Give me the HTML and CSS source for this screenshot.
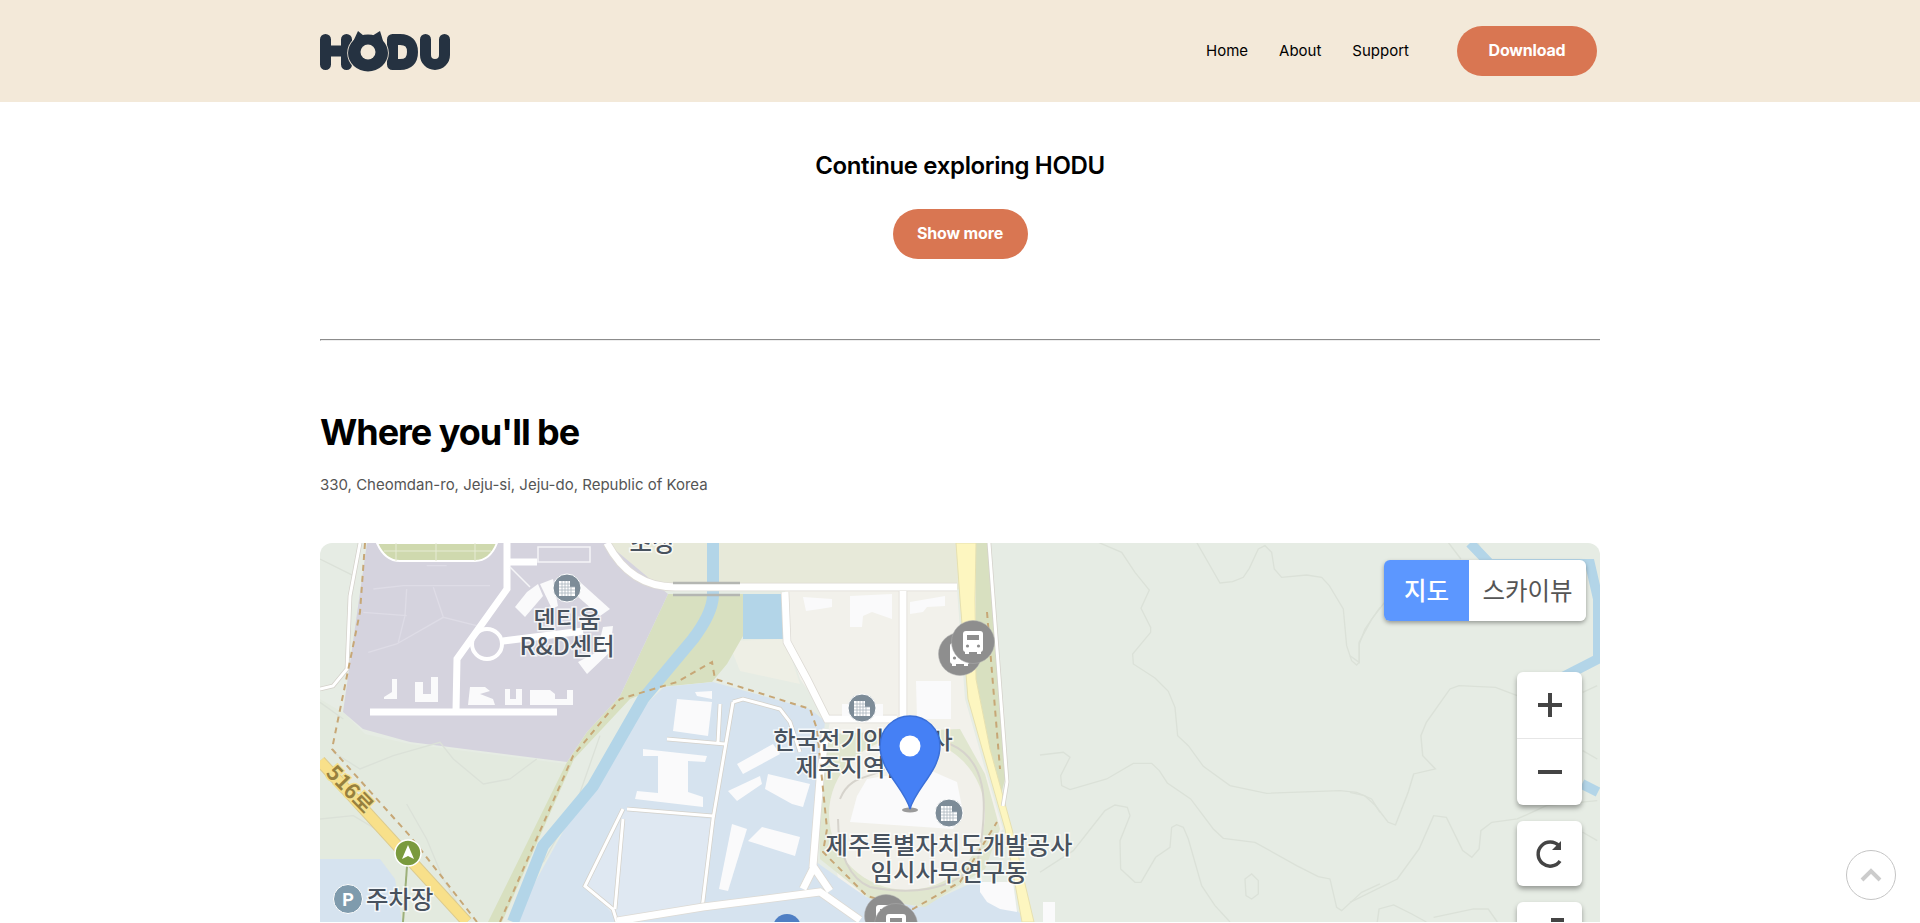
FILE: index.html
```html
<!DOCTYPE html>
<html lang="en">
<head>
<meta charset="utf-8">
<title>HODU</title>
<link rel="stylesheet" href="styles.css">
</head>
<body>
<header class="site-header">
  <div class="container header-inner">
    <a class="logo" href="#" aria-label="HODU">
      <svg width="131" height="42" viewBox="320 30 131 42" class="logo-svg">
        <g class="logo-stroke">
          <path d="M325.5 39.5V64.5M346.5 39.5V64.5M325.5 51H346.5"/>
          <path d="M392.5 39.5V64.5H400Q412.5 64.5 412.5 52T400 39.5Z"/>
          <path d="M425.5 39.5V55A9.5 9.5 0 0 0 444.5 55V39.5"/>
        </g>
        <ellipse class="logo-gap" cx="368" cy="53" rx="20.800" ry="19.300"/>
        <ellipse class="logo-fill" cx="368" cy="53" rx="20" ry="18.500"/>
        <path class="logo-fill" d="M358 31L364 36L352 44Z"/>
        <path class="logo-fill" d="M380 31L372 36L384 44Z"/>
        <circle class="logo-gap" cx="368" cy="52" r="7.500"/>
      </svg>
    </a>
    <nav class="nav">
      <a href="#">Home</a>
      <a href="#">About</a>
      <a href="#">Support</a>
      <a href="#" class="btn btn-download">Download</a>
    </nav>
  </div>
</header>

<main class="container">
  <section class="explore">
    <h3 class="explore-title">Continue exploring HODU</h3>
    <a href="#" class="btn btn-more">Show more</a>
  </section>
  <hr class="divider">
  <section class="where">
    <h2 class="where-title">Where you'll be</h2>
    <p class="where-address">330, Cheomdan-ro, Jeju-si, Jeju-do, Republic of Korea</p>
    <div class="map">
      <svg class="map-svg" width="1280" height="379" viewBox="320 544 1280 379">
        <defs>
          <g id="bld">
            <circle r="14" class="ic-bld"/>
            <path class="ic-glyph" d="M-8 -7H3V-1H8V8H-8Z"/>
            <path class="ic-grid" d="M-5 -7V8M-2 -7V8M1 -7V8M4 -1V8M-8 -4H3M-8 -1H8M-8 2H8M-8 5H8"/>
          </g>
          <g id="bus">
            <circle r="21.5" class="ic-bus"/>
            <rect x="-10" y="-11" width="20" height="21" rx="3" class="ic-glyph"/>
            <rect x="-6" y="-7" width="12" height="5" class="ic-bus-win"/>
            <rect x="-8" y="9" width="4" height="3" class="ic-glyph"/>
            <rect x="4" y="9" width="4" height="3" class="ic-glyph"/>
            <circle cx="-5.5" cy="4" r="1.6" class="ic-bus-win"/>
            <circle cx="5.5" cy="4" r="1.6" class="ic-bus-win"/>
          </g>
        </defs>

        <rect x="320" y="544" width="1280" height="379" class="m-base"/>
        <path class="m-low" d="M320 700L345 715L365 735L410 745L567 765L500 923H320Z"/>
        <path class="m-top" d="M610 544H960V590H675Q630 590 610 544Z"/>
        <path class="m-beige" d="M785 590H957L965 700L985 770L1003 830L960 880L900 900L840 890L820 780L830 722L800 680L787 640Z"/>
        <path class="m-beige2" d="M728 642L785 640L800 685L740 672Z"/>
        <path class="m-green" d="M668 595H747V630L727 665L712 683L660 688L630 700L574 760L502 923H488L567 763L587 733L620 697Z"/>
        <path class="m-campus" d="M664 688L713 683L810 710L825 722L812 860L866 898L920 908L980 880L1030 923H513L620 730Z"/>
        <path class="m-campus-in" d="M625 812L712 820L702 908L618 921L587 887Z"/>
        <path class="m-green2" d="M826 735L818 800L820 860L870 900L925 908L985 870L1000 830L985 775L960 730Z"/>
        <ellipse class="m-site" cx="907" cy="815" rx="78" ry="76"/>
        <path class="m-campus" d="M320 860H380L395 880L402 923H320Z"/>
        <path class="m-purple" d="M367 544L343 713L363 730L410 743L567 763L587 733L620 697L668 595L607 544Z"/>
        <path class="m-field" d="M377 544Q385 562 400 562H475Q490 562 497 544Z"/>
        <path class="m-field-line" d="M396 544V562M436 544V562M475 544V562M384 552H491"/>
        <path class="m-stripgreen" d="M976 544L988 544L1005 780L1000 800L990 750L976 680Z"/>

        <g transform="translate(310 530) scale(.3333)" class="m-inner">
          <path d="M190 180L280 170L370 170L540 170M290 180L285 260L265 340M175 370L260 345L400 265L500 290M370 175L400 265M160 250L290 260M350 110H410"/>
        </g>
        <g transform="translate(1040 530) scale(.3333)" class="m-contour">
          <path d="M175 40L245 70L285 130L328 183L303 238L332 295V310L278 375L280 405L345 447L385 487L405 535L413 620L445 650L490 712L570 770L680 793L900 785L950 790L995 810L1020 850"/>
          <path d="M470 40L540 162L578 158L610 145L628 118L655 60L675 50L695 70L703 120L725 145L800 138L845 145L868 170L910 240L920 350L935 395L950 408L958 400V345L975 300L1020 235"/>
          <path d="M0 678L70 670L90 685L62 740L65 770L90 782L200 750L280 703L335 703L358 725L382 762L452 810L520 900L550 928L645 940L770 1010L835 1043L870 1050L890 1135L905 1145L965 1090L1020 1065"/>
          <path d="M0 1030L100 965L195 845L225 828L262 835L270 860L240 935L242 1020L285 1060H303L347 985L390 955L395 895L410 887L430 895L445 930L485 1070L525 1130L570 1179"/>
          <path d="M615 1050L635 1035L655 1055V1095L635 1110L618 1100Z"/>
        </g>
        <g transform="translate(1350 530) scale(.3636 .3333)" class="m-contour">
          <path d="M0 790L40 800L70 830L105 880L125 888L160 790L175 735L235 720L200 680L195 620L210 580L275 480L300 470L400 475L460 500"/>
          <path d="M0 1120L130 1050L190 960L230 860L265 865L310 965L335 985L355 960L360 905L390 880L460 870L540 830L680 815"/>
          <path d="M640 490L680 470M640 665L680 690M640 910L680 935M0 380L25 400V340L60 270L95 220M270 40L305 90M350 40L375 90"/>
          <path d="M75 1179L80 1140L120 1128L170 1155L210 1179M230 1165L340 1140L380 1140L405 1179"/>
        </g>
        <g transform="translate(310 530) scale(.3333)" class="m-contour">
          <path d="M30 90L130 140M30 520L100 570M70 670L150 720L250 680L390 640L430 690L520 765L600 750L680 690M290 825L350 930L400 1050L440 1120M30 870L130 860L230 920M700 1000L800 820L870 620"/>
        </g>

        <path class="m-water" d="M713 544V597Q712 615 693 640L643 700L593 787L543 847L513 923"/>
        <path class="m-water-thin" d="M1470 544L1490 565H1590L1598 600L1598 660L1555 682"/>
        <path class="m-water-thin" d="M1582 785L1598 793"/>
        <rect class="m-pond" x="743" y="595" width="40" height="45"/>

        <path class="m-road-y-edge" d="M320 762L467 923"/>
        <path class="m-road-y" d="M320 762L467 923"/>
        <path class="m-pale" d="M956 544L960 600L968 700L985 760L1005 830L1022 923H1034L1012 830L990 750L976 680L975 600L976 544Z"/>

        <g class="r-edge">
          <path d="M733 703L713 820L702 910M667 740L725 745M720 705L718 743M733 703L743 700L780 710L790 723L800 753M627 810L713 817M623 810L585 887L613 910L617 923M623 820L615 910"/>
          <path d="M989 544L1007 783L1003 807"/>
          <path d="M360 544L350 597L347 670L333 687L320 690"/>
        </g>
        <g class="r-white">
          <path d="M733 703L713 820L702 910M667 740L725 745M720 705L718 743M733 703L743 700L780 710L790 723L800 753M627 810L713 817M623 810L585 887L613 910L617 923M623 820L615 910"/>
          <path d="M989 544L1007 783L1003 807"/>
          <path d="M360 544L350 597L347 670L333 687L320 690"/>
        </g>
        <g class="r-wide-edge">
          <path d="M617 922L703 908L820 893L860 921"/>
          <path d="M785 593L787 643L807 680L827 720H897"/>
          <path d="M903 592V717"/>
          <path d="M607 544Q630 588 675 588H957"/>
          <path d="M826 730L820 780L813 867L830 892M813 870L803 890"/>
        </g>
        <g class="r-wide">
          <path d="M617 922L703 908L820 893L860 921"/>
          <path d="M785 593L787 643L807 680L827 720H897"/>
          <path d="M903 592V717"/>
          <path d="M607 544Q630 588 675 588H957"/>
          <path d="M826 730L820 780L813 867L830 892M813 870L803 890"/>
          <path d="M507 544V590L457 660L456 712"/>
          <path d="M370 713H557"/>
          <path d="M510 563H537"/>
          <path d="M503 642L583 632"/>
        </g>
        <path class="r-bridge" d="M673 584H740M673 596H740"/>
        <circle class="r-round" cx="487" cy="645" r="15"/>
        <path class="r-thin" d="M510 568L530 588M538 548H590V563H538Z"/>
        <path class="r-site" d="M840 800C850 775 870 780 885 770M950 745C985 760 990 800 978 860C955 895 905 895 870 888C850 880 838 855 838 820"/>

        <g class="m-bld">
          <path d="M515 608L525 618L543 597L538 585L527 593Z"/>
          <path d="M540 585L553 580L558 607L552 610Z"/>
          <path d="M580 583L610 610L600 617L577 597Z"/>
          <path d="M603 628L613 627L610 653L587 675L578 663L597 653Z"/>
          <path d="M384 698L392 693V680H397V700H384Z"/>
          <path d="M415 703H438V678H431V695H423V683H415Z"/>
          <path d="M468 706H495L493 700L480 695L490 692L485 688H470Z"/>
          <path d="M505 706H522V690H516V700H510V690H505Z"/>
          <path d="M530 706H573V691H567V700H555V695L550 691H530Z"/>
          <path d="M677 700L712 703L708 737L673 732Z"/>
          <path d="M695 693L712 692V700L697 697Z"/>
          <path d="M643 750L707 757L705 763L688 762V793L703 798V808L635 800L637 792L658 794V757L643 757Z"/>
          <path d="M737 765L773 745L780 755L743 775Z"/>
          <path d="M728 792L760 777L762 785L737 802Z"/>
          <path d="M768 775L810 785L803 808L792 805L765 790Z"/>
          <path d="M732 825L747 830L728 892L719 890Z"/>
          <path d="M762 828L800 838L795 857L748 842Z"/>
          <path d="M803 598L832 600V608L820 610L806 612Z"/>
          <path d="M850 597L892 595V620L872 613L863 617L862 628H850Z"/>
          <path d="M910 603L945 597V607L927 608L923 613L910 615Z"/>
          <path d="M916 682H951V720H917Z"/>
          <path d="M842 705H883V717H842Z"/>
          <path d="M867 780L927 770L957 783L963 813L953 830L850 823L857 797Z"/>
          <path d="M980 883H1013L1017 913L1000 910L987 903L980 893Z"/>
          <path d="M1043 903H1055V923H1043Z"/>
        </g>

        <path class="m-dash" d="M365 544L360 613L332 750L410 837L477 923"/>
        <path class="m-dash" d="M500 923L573 757L620 700L677 683L712 663L715 680L810 710L817 730L827 830L823 853L867 897L913 910L960 883L997 823"/>
        <path class="m-dash" d="M987 613L1000 770"/>

        <g class="m-road-label" transform="translate(351 789) rotate(46)">
          <text text-anchor="middle">516로</text>
        </g>
        <use href="#bld" x="567" y="589"/>
        <use href="#bld" x="862" y="709"/>
        <use href="#bld" x="949" y="814"/>
        <use href="#bus" x="960" y="655"/>
        <use href="#bus" x="973" y="643"/>
        <use href="#bus" x="886" y="917"/>
        <use href="#bus" x="896" y="926"/>
        <circle cx="787" cy="929" r="14" class="ic-blue"/>

        <path class="r-thin-g" d="M407 867L403 923"/>
        <circle cx="408" cy="854" r="13" class="ic-nav"/>
        <path class="ic-glyph" d="M408 846L414 860L408 857L402 860Z"/>
        <circle cx="348" cy="900" r="14.5" class="ic-p"/>
        <text x="348" y="906.500" text-anchor="middle" class="ic-p-text">P</text>

        <text x="652" y="552" text-anchor="middle" class="m-label">초정</text>
        <text x="567" y="629" text-anchor="middle" class="m-label">덴티움</text>
        <text x="567" y="656" text-anchor="middle" class="m-label">R&amp;D센터</text>
        <text x="863" y="750" text-anchor="middle" class="m-label">한국전기안전공사</text>
        <text x="863" y="777" text-anchor="middle" class="m-label">제주지역본부</text>
        <text x="949" y="855" text-anchor="middle" class="m-label">제주특별자치도개발공사</text>
        <text x="949" y="882" text-anchor="middle" class="m-label">임시사무연구동</text>
        <text x="366" y="909" class="m-label">주차장</text>

        <ellipse cx="910" cy="811" rx="8" ry="2.500" class="pin-shadow"/>
        <path class="pin" d="M910 810C905 790 880 772 880 747A30 30 0 1 1 940 747C940 772 915 790 910 810Z"/>
        <circle cx="910" cy="747" r="10.500" class="ic-glyph"/>
      </svg>

      <div class="map-tabs">
        <span class="tab tab-on">지도</span>
        <span class="tab tab-off">스카이뷰</span>
      </div>
      <div class="map-controls">
        <div class="ctrl-card">
          <button class="ctrl ctrl-half" aria-label="zoom in">
            <svg width="26" height="26" viewBox="0 0 26 26"><path class="ctrl-line" d="M1 13H25M13 1V25"/></svg>
          </button>
          <button class="ctrl ctrl-half ctrl-sep" aria-label="zoom out">
            <svg width="26" height="26" viewBox="0 0 26 26"><path class="ctrl-line" d="M1 13H25"/></svg>
          </button>
        </div>
        <div class="ctrl-card">
          <button class="ctrl ctrl-single" aria-label="reset">
            <svg width="32" height="32" viewBox="0 0 32 32">
              <path class="ctrl-arc" d="M25 8A12 12 0 1 0 26 23"/>
              <path class="ctrl-arrow" d="M27 3V12H18Z"/>
            </svg>
          </button>
        </div>
        <div class="ctrl-card">
          <button class="ctrl ctrl-single ctrl-cut" aria-label="full screen">
            <svg width="14" height="12" viewBox="0 0 14 12"><path class="ctrl-arrow" d="M1 0H14V12H10V4H1Z"/></svg>
          </button>
        </div>
      </div>
    </div>
  </section>
</main>

<a href="#" class="to-top" aria-label="top">
  <svg width="22" height="14" viewBox="0 0 22 14"><path class="to-top-line" d="M2 12L11 3L20 12"/></svg>
</a>
</body>
</html>
```
FILE: styles.css
```css
* { box-sizing: border-box; }
html, body { margin: 0; padding: 0; background: #fff; }
body { font-family: Inter, "Liberation Sans", sans-serif; color: #000; }
a { color: inherit; text-decoration: none; }

.container { width: 1280px; margin: 0 auto; }

.site-header { height: 102px; background: #f3e9d9; }
.header-inner { height: 100%; display: flex; align-items: center; justify-content: space-between; padding-right: 3px; }
.logo { display: block; height: 42px; }
.logo-svg { display: block; }
.logo-stroke { fill: none; stroke: #253241; stroke-width: 11; stroke-linecap: round; stroke-linejoin: round; }
.logo-gap { fill: #f3e9d9; }
.logo-fill { fill: #253241; }

.nav { display: flex; align-items: center; gap: 31px; font-size: 15px; line-height: 16px; }
.btn { display: flex; align-items: center; justify-content: center; height: 50px; border-radius: 25px; background: #d97652; color: #fff; font-weight: 700; font-size: 16px; letter-spacing: -.2px; padding-bottom: 2px; }
.nav .btn-download { width: 140px; margin-left: 17px; }
.btn-more { width: 135px; margin: 0 auto; letter-spacing: -.15px; }

.explore { padding-top: 49px; padding-bottom: 80px; text-align: center; }
.explore-title { margin: 0 0 29px; font-size: 24px; line-height: 29px; font-weight: 600; letter-spacing: -.35px; }

.divider { margin: 0; height: 2px; border: 0; border-top: 1px solid #8c8c8c; border-left: 1px solid #8c8c8c; border-bottom: 1px solid #eee; }

.where-title { margin: 69px 0 21px; font-size: 36px; line-height: 44px; font-weight: 700; letter-spacing: -1.05px; }
.where-address { margin: 0 0 49px; font-size: 15px; line-height: 19px; color: #555; }

.map { position: relative; height: 379px; overflow: hidden; border-radius: 12px 12px 0 0; }
.map-svg { display: block; }

.m-base { fill: #e6ece4; }
.m-low { fill: #e3eadf; }
.m-top { fill: #e7e9d9; }
.m-beige { fill: #f2f1eb; }
.m-beige2 { fill: #eeefe5; }
.m-green { fill: #d8e0c0; }
.m-green2 { fill: #e0e6cf; }
.m-campus { fill: #d6e3ef; }
.m-campus-in { fill: #dfe8f2; }
.m-site { fill: #f1f0ea; }
.m-purple { fill: #d5d3de; }
.m-field { fill: #cfd9ae; stroke: #fff; stroke-width: 2; }
.m-field-line { fill: none; stroke: #e6ebd4; stroke-width: 1; }
.m-stripgreen { fill: #d8e0c0; }
.m-inner { fill: none; stroke: #dedce6; stroke-width: 4; }
.m-contour { fill: none; stroke: #dbe1d8; stroke-width: 4; }
.m-water { fill: none; stroke: #b3d5e8; stroke-width: 12; }
.m-water-thin { fill: none; stroke: #b3d5e8; stroke-width: 10; }
.m-pond { fill: #b3d5e8; }
.m-road-y { fill: none; stroke: #f8e08a; stroke-width: 10; }
.m-road-y-edge { fill: none; stroke: #dccb8f; stroke-width: 12; }
.m-pale { fill: #fdf6c0; stroke: #e6e0b0; stroke-width: 1; }
.r-edge { fill: none; stroke: #d4d1ca; stroke-width: 4.5; }
.r-white { fill: none; stroke: #fff; stroke-width: 3; }
.r-wide-edge { fill: none; stroke: #dddad4; stroke-width: 8.5; }
.r-wide { fill: none; stroke: #fff; stroke-width: 7; }
.r-bridge { fill: none; stroke: #b4b6b2; stroke-width: 2.5; }
.r-round { fill: none; stroke: #fff; stroke-width: 4; }
.r-thin { fill: none; stroke: #f5f5f7; stroke-width: 1.5; }
.r-thin-g { fill: none; stroke: #9db07a; stroke-width: 2; }
.r-site { fill: none; stroke: #d6d3cc; stroke-width: 2; }
.m-bld path { fill: #fafafb; }
.m-dash { fill: none; stroke: #c7a776; stroke-width: 2; stroke-dasharray: 6 5; }
.m-road-label text { font-family: "Noto Sans CJK KR", sans-serif; font-size: 21px; font-weight: 700; fill: #97803e; stroke: #f5e08e; stroke-width: 3px; paint-order: stroke; dominant-baseline: central; }
.ic-bld { fill: #7d8c98; stroke: #fff; stroke-width: 1; }
.ic-glyph { fill: #fff; }
.ic-grid { fill: none; stroke: #a9b4bc; stroke-width: .8; }
.ic-bus { fill: #8e8e8e; stroke: #b0b0b0; stroke-width: .5; }
.ic-bus-win { fill: #8e8e8e; }
.ic-blue { fill: #4f7fc4; }
.ic-nav { fill: #7a9a3e; stroke: #fff; stroke-width: 1.5; }
.ic-p { fill: #7f9bad; stroke: #fff; stroke-width: 1; }
.ic-p-text { font-family: Roboto, sans-serif; font-size: 18px; font-weight: 700; fill: #fff; }
.m-label { font-family: "Noto Sans CJK KR", sans-serif; font-size: 24.4px; font-weight: 500; fill: #48525e; stroke: #fff; stroke-opacity: .75; stroke-width: 3px; paint-order: stroke; }
.pin { fill: #4580f5; stroke: #3a6fd8; stroke-width: 1.5; }
.pin-shadow { fill: #9a9a9a; }

.map-tabs { position: absolute; top: 17px; right: 14px; width: 202px; height: 61px; display: flex; border-radius: 6px; overflow: hidden; box-shadow: 0 2px 4px rgba(0, 0, 0, .35); font-family: "Noto Sans CJK KR", sans-serif; font-size: 24.5px; }
.tab { display: flex; align-items: center; justify-content: center; padding-bottom: 2px; }
.tab-on { width: 85px; background: #5c97ff; color: #fff; font-weight: 500; }
.tab-off { flex: 1; background: #fff; color: #555; }

.map-controls { position: absolute; top: 129px; right: 18px; width: 65px; display: flex; flex-direction: column; gap: 16px; }
.ctrl-card { background: #fff; border-radius: 6px; box-shadow: 0 3px 5px rgba(0, 0, 0, .35); }
.ctrl { display: flex; align-items: center; justify-content: center; width: 100%; padding: 0; border: 0; background: none; }
.ctrl-half { height: 66px; }
.ctrl-sep { height: 67px; border-top: 1px solid #e6e6e6; }
.ctrl-single { height: 65px; }
.ctrl-cut { align-items: flex-start; padding-top: 16px; padding-left: 14px; }
.ctrl-line { fill: none; stroke: #444; stroke-width: 4; }
.ctrl-arc { fill: none; stroke: #444; stroke-width: 3.5; }
.ctrl-arrow { fill: #444; }

.to-top { position: fixed; left: 1846px; top: 850px; width: 50px; height: 50px; display: flex; align-items: center; justify-content: center; border: 1px solid #c4c4c4; border-radius: 50%; background: #fff; }
.to-top-line { fill: none; stroke: #ccc; stroke-width: 4; }
```
